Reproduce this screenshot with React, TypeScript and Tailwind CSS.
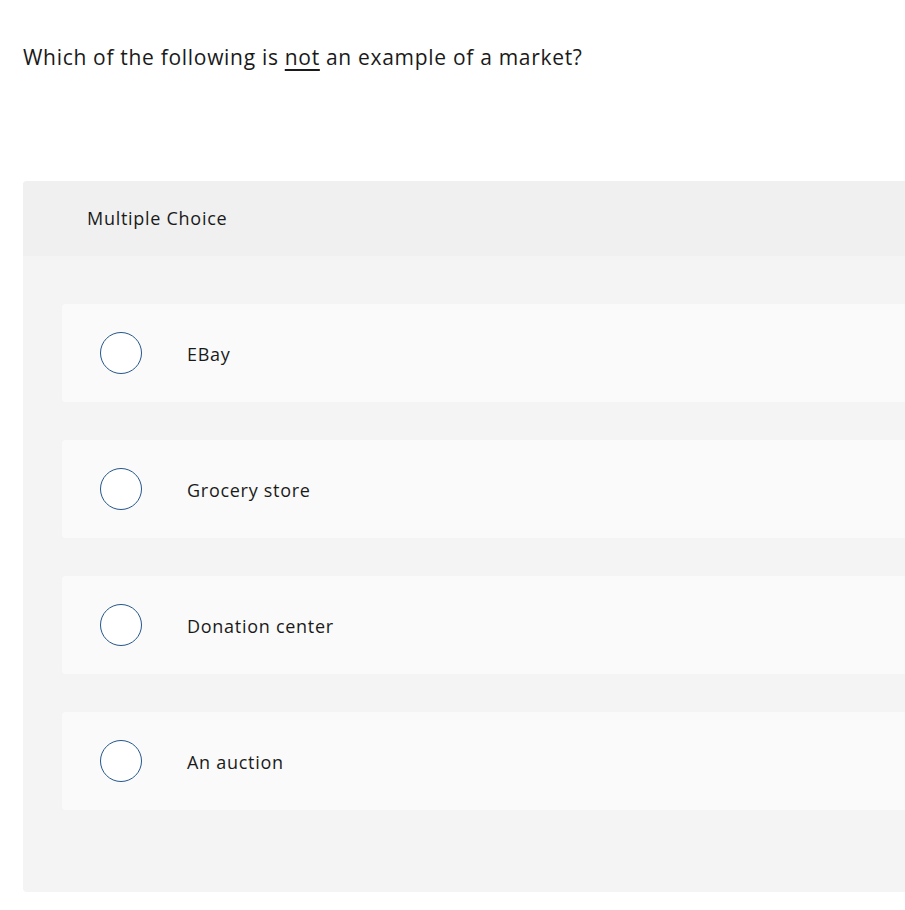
import React from "react";

const options = ["EBay", "Grocery store", "Donation center", "An auction"];

export default function App() {
  return (
    <div
      className="w-[905px] h-[910px] overflow-hidden bg-white text-[#1a1a1a]"
      style={{ fontFamily: "'Open Sans', sans-serif" }}
    >
      <div className="pl-[23px] pt-[42px]">
        <p className="text-[21px] leading-[30px] tracking-[0.033em] m-0">
          Which of the following is{" "}
          <span className="underline decoration-[2px] underline-offset-[4px]">not</span> an example of a market?
        </p>
      </div>
      <div className="ml-[23px] mt-[109px] rounded-l-[4px] bg-[#f4f4f4] h-[711px] overflow-hidden">
        <div className="h-[75px] bg-[#f0f0f0] flex items-center pl-[64px]">
          <span className="text-[18px] tracking-[0.04em]">Multiple Choice</span>
        </div>
        <div className="pt-[48px] pl-[39px] flex flex-col gap-[38px]">
          {options.map((o) => (
            <div
              key={o}
              className="h-[98px] bg-[#fafafa] rounded-l-[4px] flex items-center pl-[38px]"
            >
              <div className="w-[42px] h-[42px] rounded-full border-[1.5px] border-[#25568c] bg-white shrink-0" />
              <span className="ml-[45px] text-[18px] tracking-[0.04em] translate-y-[1px]">{o}</span>
            </div>
          ))}
        </div>
      </div>
    </div>
  );
}
